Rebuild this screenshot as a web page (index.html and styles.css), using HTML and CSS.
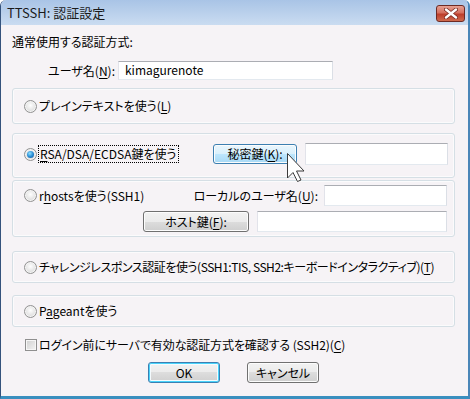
FILE: index.html
```html
<!DOCTYPE html>
<html lang="ja">
<head>
  <meta charset="UTF-8">
  <title>TTSSH: 認証設定</title>
  <link rel="stylesheet" href="styles.css">
</head>
<body>
  <div class="window">
    <div class="titlebar">
      <span class="title">TTSSH: 認証設定</span>
      <span class="close">
        <svg width="14" height="11" viewBox="0 0 14 11">
          <path d="M2 1.5 L12 9.5 M12 1.5 L2 9.5" stroke="#7a2a20" stroke-width="4" stroke-linecap="round"/>
          <path d="M2 1.5 L12 9.5 M12 1.5 L2 9.5" stroke="#fff" stroke-width="2.4" stroke-linecap="round"/>
        </svg>
      </span>
    </div>

    <div class="dialog">
      <div class="caption">通常使用する認証方式:</div>

      <div class="user-row">
        <span class="user-label">ユーザ名(<u>N</u>):</span>
        <div class="field user-field">kimagurenote</div>
      </div>

      <!-- 方式ごとのグループ -->
      <div class="group g-plain">
        <div class="option"><span class="radio"></span><span>プレインテキストを使う(<u>L</u>)</span></div>
      </div>

      <div class="group g-rsa">
        <div class="row">
          <div class="option"><span class="radio checked"></span><span class="focus"><u>R</u>SA/DSA/ECDSA鍵を使う</span></div>
          <span class="btn hot key-btn">秘密鍵(<u>K</u>):</span>
          <div class="field key-field"></div>
        </div>
      </div>

      <div class="group g-rhosts">
        <div class="row">
          <div class="option"><span class="radio"></span><span>r<u>h</u>ostsを使う(SSH1)</span></div>
          <span class="local-label">ローカルのユーザ名(<u>U</u>):</span>
          <div class="field local-field"></div>
        </div>
        <div class="row row-end">
          <span class="btn host-btn">ホスト鍵(<u>F</u>):</span>
          <div class="field host-field"></div>
        </div>
      </div>

      <div class="group g-challenge">
        <div class="option"><span class="radio"></span><span class="tight">チャレンジレスポンス認証を使う(SSH1:TIS, SSH2:キーボードインタラクティブ)(<u>T</u>)</span></div>
      </div>

      <div class="group g-pageant">
        <div class="option"><span class="radio"></span><span>P<u>a</u>geantを使う</span></div>
      </div>

      <div class="check-row">
        <span class="checkbox"></span><span class="tight-sm">ログイン前にサーバで有効な認証方式を確認する (SSH2)(<u>C</u>)</span>
      </div>

      <div class="buttons">
        <span class="btn default">OK</span>
        <span class="btn">キャンセル</span>
      </div>
    </div>

    <svg class="cursor" width="20" height="31" viewBox="0 0 20 31">
      <path d="M0.5 0.5 L0.5 25 L6 19.5 L10.5 28.5 L14 27 L9.5 18 L17 18 Z" fill="#fff" stroke="#3a3a3a" stroke-width="1" stroke-linejoin="round"/>
    </svg>
  </div>
</body>
</html>
```

FILE: styles.css
```css
html,
body {
  margin: 0;
  padding: 0;
  background: #fff;
}

body {
  font-family: "Noto Sans CJK JP", sans-serif;
  font-size: 12px;
  line-height: 16px;
  color: #000;
  font-feature-settings: "palt";
}

u {
  text-underline-offset: 2px;
}

.window {
  position: relative;
  width: 470px;
  height: 399px;
  box-sizing: border-box;
  display: flex;
  flex-direction: column;
  background: #f6f3f6;
  border-left: 1px solid #34527c;
  border-right: 2px solid #4a86b8;
  border-bottom: 3px solid #3a8fbf;
  border-radius: 6px 6px 0 0;
  overflow: hidden;
}

.titlebar {
  flex: none;
  height: 25px;
  display: flex;
  align-items: center;
  justify-content: space-between;
  padding: 0 3px 0 6px;
  background: linear-gradient(#a9c4e6, #cadcf1);
}

.title {
  font-size: 13px;
  color: #1a1a1a;
}

.close {
  width: 29px;
  height: 17px;
  box-sizing: border-box;
  display: flex;
  align-items: center;
  justify-content: center;
  border: 1px solid #6d2a24;
  border-radius: 3px;
  background: linear-gradient(#e6a093, #d5705f 45%, #bd3e2b 55%, #cf6a4e);
  margin-top: 1px;
}

.dialog {
  flex: 1;
  padding: 9px 13px 0 11px;
}

.caption {
  height: 16px;
}

.user-row {
  display: flex;
  align-items: center;
  margin-top: 11px;
}

.user-label {
  width: 103px;
  text-align: right;
  margin-right: 3px;
}

.field {
  box-sizing: border-box;
  background: #fff;
  border: 1px solid #abadb3;
  border-color: #abadb3 #dbdfe6 #e3e9ef #e2e3ea;
}

.user-field {
  width: 215px;
  height: 19px;
  padding-left: 6px;
  line-height: 16px;
}

.group {
  box-sizing: border-box;
  display: flex;
  flex-direction: column;
  justify-content: center;
  border: 1px solid #d5dfe5;
  border-radius: 3px;
  box-shadow: inset 0 0 0 1px #fbfbfc;
  padding: 0 6px 0 11px;
}

.g-plain {
  height: 36px;
  margin-top: 8px;
}

.g-rsa {
  height: 45px;
  margin-top: 9px;
  justify-content: flex-start;
  padding-top: 9px;
}

.g-rhosts {
  height: 57px;
  margin-top: 2px;
  justify-content: flex-start;
  padding-top: 4px;
  padding-right: 7px;
  gap: 5px;
}

.g-challenge {
  height: 32px;
  margin-top: 14px;
}

.g-pageant {
  height: 32px;
  margin-top: 12px;
}

.row {
  display: flex;
  align-items: center;
}

.row-end {
  justify-content: flex-end;
}

.option {
  display: flex;
  align-items: center;
  gap: 2px;
  flex: 1;
  white-space: nowrap;
}

.tight {
  letter-spacing: -0.45px;
}

.tight-sm {
  letter-spacing: -0.1px;
  white-space: nowrap;
}

.radio {
  position: relative;
  width: 13px;
  height: 13px;
  box-sizing: border-box;
  flex: none;
  border-radius: 50%;
  border: 1px solid #929292;
  background: radial-gradient(circle at 50% 40%, #fefefe, #e2e2e2 60%, #c9c9c9);
  box-shadow: inset 0 0 0 1px #f4f4f4;
}

.radio.checked::after {
  content: "";
  position: absolute;
  left: 2px;
  top: 2px;
  width: 7px;
  height: 7px;
  border-radius: 50%;
  background: radial-gradient(circle at 40% 35%, #8fe0ff, #2b8fd6 50%, #0e4f96);
}

.focus {
  outline: 1px dotted #000;
  outline-offset: 0;
  padding: 0 1px;
}

.btn {
  box-sizing: border-box;
  display: flex;
  align-items: center;
  justify-content: center;
  height: 21px;
  border: 1px solid #707070;
  border-radius: 3px;
  background: linear-gradient(#f2f2f2, #ebebeb 50%, #dddddd 50%, #cfcfcf);
  box-shadow: inset 0 0 0 1px #fcfcfc;
}

.btn.hot {
  border-color: #3c7fb1;
  background: linear-gradient(#eaf6fd, #d9f0fc 50%, #bee6fd 50%, #a7d9f5);
}

.btn.default {
  border-color: #3c7fb1;
  box-shadow: inset 0 0 0 1px #48d3fb, inset 0 0 0 2px #f4fbfe;
}

.key-btn {
  width: 84px;
  height: 20px;
  margin-right: 8px;
}

.key-field {
  width: 143px;
  height: 22px;
}

.local-label {
  margin-right: 6px;
}

.local-field {
  width: 123px;
  height: 21px;
}

.host-btn {
  width: 106px;
  margin-right: 8px;
}

.host-field {
  width: 190px;
  height: 21px;
}

.check-row {
  display: flex;
  align-items: center;
  gap: 2px;
  margin-top: 10px;
  padding-left: 13px;
}

.checkbox {
  width: 12px;
  height: 12px;
  box-sizing: border-box;
  flex: none;
  border: 1px solid #8f8f8f;
  background: linear-gradient(135deg, #cfcfcf, #f4f4f4);
  box-shadow: inset 0 0 0 1px #f6f6f6;
}

.buttons {
  display: flex;
  justify-content: center;
  gap: 27px;
  margin-top: 9px;
}

.buttons .btn {
  width: 72px;
}

.cursor {
  position: absolute;
  left: 286px;
  top: 153px;
}
```
